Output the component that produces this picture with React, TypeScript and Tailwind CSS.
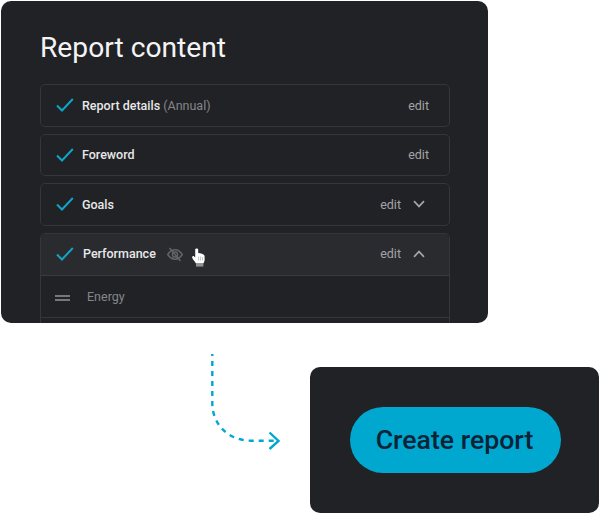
const roboto = "font-['Roboto',sans-serif]";

function Check() {
  return (
    <svg width="18" height="14" viewBox="0 0 18 14" fill="none" className="shrink-0">
      <path d="M1 7.5L6 12.5L16.8 1" stroke="#0ea5c9" strokeWidth="2" />
    </svg>
  );
}

function Chevron({ up }: { up?: boolean }) {
  return (
    <svg width="12" height="8" viewBox="0 0 12 8" fill="none">
      <path
        d={up ? "M1 6.8L6 1.6L11 6.8" : "M1 1.2L6 6.4L11 1.2"}
        stroke="#a3a4a7"
        strokeWidth="1.7"
      />
    </svg>
  );
}

function EyeOff() {
  return (
    <svg width="16" height="15" viewBox="0 0 16 15" fill="none" className="shrink-0">
      <path
        d="M.8 7.5C2.8 4.3 5 2.8 8 2.8C11 2.8 13.2 4.3 15.2 7.5C13.2 10.7 11 12.2 8 12.2C5 12.2 2.8 10.7 .8 7.5Z"
        stroke="#636468"
        strokeWidth="1.5"
      />
      <circle cx="8" cy="7.5" r="2.6" stroke="#636468" strokeWidth="1.5" />
      <path d="M2.5 1L13.5 14" stroke="#636468" strokeWidth="1.5" />
    </svg>
  );
}

function HandCursor() {
  return (
    <svg width="13" height="19" viewBox="0 0 13 19" fill="none" className="shrink-0">
      <path
        d="M3.2 1.6C3.4 .2 6 .2 6.2 1.6V5L8 5.2L10 5.8L11.4 6.6C12.2 7 12.6 7.6 12.6 8.4V12C12.6 13.4 11.8 14.4 11.4 15.6H4C3.4 14 1.8 12.6 .8 11C0 9.8 0 8.2 .9 8C1.8 7.8 2.4 8.6 3.2 9.4V1.6Z"
        fill="white"
      />
      <path d="M6.6 8.5V12.5M8.6 8.5V12.5M10.6 8.8V12.5" stroke="#9a9a9a" strokeWidth="0.6" />
      <rect x="4" y="16" width="7.4" height="2.6" fill="#8f9093" />
    </svg>
  );
}

function Row({
  children,
  chevron,
}: {
  children: React.ReactNode;
  chevron?: boolean;
}) {
  return (
    <div className="flex h-[42.5px] items-center rounded-[5px] border border-[#35363a] pl-[15px] pr-[20px]">
      <Check />
      <div className="ml-[8px] flex-1 pt-[1.6px] text-[12.5px] font-medium text-[#e8e8e9]">{children}</div>
      <span className="pt-[1.6px] text-[12.5px] text-[#a3a4a7]">edit</span>
      {chevron && (
        <span className="ml-[12px] mr-[4px] flex">
          <Chevron />
        </span>
      )}
    </div>
  );
}

function ReportPanel() {
  return (
    <div className="ml-[1px] mt-[1px] h-[322px] w-[487px] overflow-hidden rounded-[10px] bg-[#212226] pl-[39px] pr-[38px] pt-[27px]">
      <h1 className="h-[56px] text-[28.2px] leading-[40px] text-[#f4f4f5]">Report content</h1>
      <div className="flex flex-col gap-[7px]">
        <Row>
          Report details <span className="font-normal text-[#85868a]">(Annual)</span>
        </Row>
        <Row>Foreword</Row>
        <Row chevron>Goals</Row>
        <div className="rounded-[5px] border border-[#35363a]">
          <div className="flex h-[42px] items-center rounded-t-[5px] border-b border-[#3a3b3f] bg-[#2a2b2f] pl-[15px] pr-[20px]">
            <Check />
            <span className="ml-[9px] text-[12.5px] font-medium text-[#e8e8e9]">Performance</span>
            <span className="ml-[11px] flex">
              <EyeOff />
            </span>
            <span className="ml-[9px] mt-[7px] flex flex-1">
              <HandCursor />
            </span>
            <span className="text-[12.5px] text-[#a3a4a7]">edit</span>
            <span className="ml-[12px] mr-[4px] flex">
              <Chevron up />
            </span>
          </div>
          <div className="flex h-[42px] items-center border-b border-[#35363a] pl-[14px] pt-[3px]">
            <div className="flex w-[15px] flex-col gap-[2px]">
              <div className="h-[2px] bg-[#77787c]" />
              <div className="h-[2px] bg-[#77787c]" />
            </div>
            <span className="ml-[17px] text-[12.5px] text-[#85868a]">Energy</span>
          </div>
          <div className="h-[20px]" />
        </div>
      </div>
    </div>
  );
}

function FlowArrow() {
  return (
    <svg width="72" height="100" viewBox="0 0 72 100" fill="none" className="ml-[209px] mt-[28px] shrink-0">
      <path
        d="M3.3 3V52C3.3 74 20 89.7 42 89.7H67"
        stroke="#00a7cf"
        strokeWidth="2.4"
        strokeDasharray="5 5"
        strokeDashoffset="3"
      />
      <path d="M60.5 81.5L69.5 90L60.5 98" stroke="#00a7cf" strokeWidth="2.4" />
    </svg>
  );
}

export default function App() {
  return (
    <div className={`${roboto} h-[513px] w-[600px] overflow-hidden bg-white`}>
      <ReportPanel />
      <div className="flex">
        <FlowArrow />
        <div className="ml-[29px] mt-[44px] flex h-[146px] w-[289px] shrink-0 items-center justify-center rounded-[10px] bg-[#212226] pl-[2px]">
          <button className="h-[66px] w-[211px] rounded-full bg-[#00a7cf] pr-[2px] text-[26.7px] font-medium text-[#0b2338]">
            Create report
          </button>
        </div>
      </div>
    </div>
  );
}
